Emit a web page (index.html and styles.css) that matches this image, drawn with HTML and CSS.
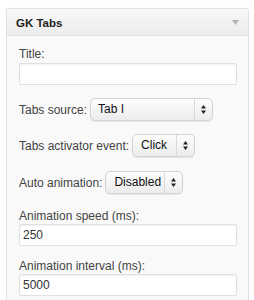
FILE: index.html
```html
<!DOCTYPE html>
<html>
<head>
<meta charset="utf-8">
<link rel="stylesheet" href="styles.css">
</head>
<body>
<div class="widget">
  <div class="widget-top">
    <span class="widget-title">GK Tabs</span>
    <svg class="toggle" width="7" height="5" viewBox="0 0 7 5"><path d="M0 0H7L3.5 5Z" fill="#b4b4b4"/></svg>
  </div>
  <div class="widget-inside">
    <div class="field f-title">
      <div class="label">Title:</div>
      <div class="input"></div>
    </div>
    <div class="row r1">
      <span class="label">Tabs source:</span>
      <div class="select s-source"><span class="val">Tab I</span><span class="arrows"><svg width="5" height="9" viewBox="0 0 5 9"><path d="M0 3.5H5L2.5 0Z M0 5.5H5L2.5 9Z" fill="#222"/></svg></span></div>
    </div>
    <div class="row r2">
      <span class="label">Tabs activator event:</span>
      <div class="select s-event"><span class="val">Click</span><span class="arrows"><svg width="5" height="9" viewBox="0 0 5 9"><path d="M0 3.5H5L2.5 0Z M0 5.5H5L2.5 9Z" fill="#222"/></svg></span></div>
    </div>
    <div class="row r3">
      <span class="label">Auto animation:</span>
      <div class="select s-auto"><span class="val">Disabled</span><span class="arrows"><svg width="5" height="9" viewBox="0 0 5 9"><path d="M0 3.5H5L2.5 0Z M0 5.5H5L2.5 9Z" fill="#222"/></svg></span></div>
    </div>
    <div class="field f-speed">
      <div class="label">Animation speed (ms):</div>
      <div class="input">250</div>
    </div>
    <div class="field f-interval">
      <div class="label">Animation interval (ms):</div>
      <div class="input">5000</div>
    </div>
  </div>
</div>
</body>
</html>
```

FILE: styles.css
```css
html, body {
  margin: 0;
  padding: 0;
  background: #ffffff;
  font-family: "Liberation Sans", Arial, sans-serif;
}
.widget {
  box-sizing: border-box;
  width: 243px;
  margin: 8px 0 0 6px;
  border: 1px solid #e0e0e0;
  border-radius: 3px 3px 0 0;
  background: #f9f9f9;
  box-shadow: 0 0 1px rgba(0,0,0,0.04);
}
.widget-top {
  height: 26px;
  display: flex;
  align-items: center;
  justify-content: space-between;
  padding: 0 9px 0 9px;
  border-bottom: 1px solid #e2e2e2;
  background: linear-gradient(#f8f8f8, #ececec);
  border-radius: 3px 3px 0 0;
}
.widget-title {
  font-weight: bold;
  font-size: 11.5px;
  color: #222;
  line-height: 26px;
  padding-top: 1px;
}
.toggle {
  display: block;
  margin-top: 1px;
}
.widget-inside {
  padding: 11px 11px 20px 12px;
  background: #f9f9f9;
}
.label {
  font-size: 12px;
  line-height: 14px;
  color: #444;
}
.input {
  box-sizing: border-box;
  height: 22px;
  width: 100%;
  background: #fff;
  border: 1px solid #e0e0e0;
  border-radius: 2px;
  box-shadow: inset 0 1px 2px rgba(0,0,0,0.06);
  font-size: 12px;
  line-height: 20px;
  color: #333;
  padding: 0 3px;
}
.field .label { margin-bottom: 2px; }
.f-speed .label, .f-interval .label { margin-bottom: 1px; }
.f-title { margin-bottom: 13px; }
.row {
  display: flex;
  align-items: center;
  height: 23px;
}
.r1 { margin-bottom: 13px; }
.r2 { margin-bottom: 14px; }
.r3 { margin-bottom: 15px; }
.f-speed { margin-bottom: 13px; }
.row .label { margin-right: 3px; }
.select {
  box-sizing: border-box;
  height: 23px;
  display: flex;
  align-items: stretch;
  border: 1px solid #d2d2d2;
  border-radius: 5px;
  background: linear-gradient(#fdfdfd, #ececec);
  box-shadow: 0 1px 1px rgba(0,0,0,0.08);
}
.select .val {
  flex: 1;
  font-size: 12px;
  line-height: 21px;
  color: #111;
  padding-left: 7px;
}
.select .arrows {
  width: 17px;
  border-left: 1px solid #dadada;
  display: flex;
  align-items: center;
  justify-content: center;
}
.select .arrows svg { display: block; }
.s-source { width: 123px; }
.s-event { width: 63px; }
.s-event .val { padding-left: 8px; }
.s-auto { width: 78px; }
.s-auto .val { padding-left: 8px; }
```
